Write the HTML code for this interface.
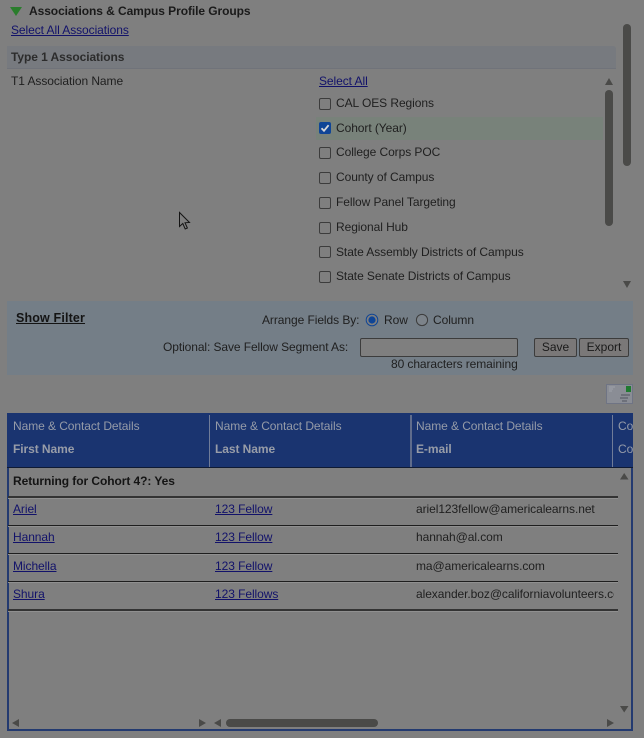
<!DOCTYPE html>
<html>
<head>
<meta charset="utf-8">
<style>
html,body{margin:0;padding:0;}
body{width:644px;height:738px;overflow:hidden;background:#7f7f7f;position:relative;font-family:"Liberation Sans",Arial,sans-serif;font-size:12px;color:#1f1f1f;}
#w{position:absolute;left:0;top:0;width:644px;height:738px;background:#7f7f7f;filter:blur(0.35px);}
.t{position:absolute;white-space:nowrap;line-height:14px;letter-spacing:-0.07px;}
.l{color:#12126a;text-decoration:underline;}
.b{font-weight:bold;}
.r{position:absolute;}
.cb{position:absolute;left:319px;width:10px;height:10px;border:1px solid #3c3c3c;border-radius:2px;}
.h{color:#959ba8;}
.hb{color:#989da8;font-weight:bold;}
.line{position:absolute;left:8px;width:610px;background:#1e1e1e;height:1px;box-shadow:0 1px 0 #909090;}
svg{position:absolute;overflow:visible;}
.btn{position:absolute;top:338px;height:17px;border:1px solid #3c3c3c;border-radius:2px;background:#7a7878;color:#1a1a1a;text-align:center;line-height:17px;box-sizing:content-box;}
</style>
</head>
<body>
<div id="w">
<svg style="left:10px;top:7px" width="13" height="9"><polygon points="0,0 12,0 6,9" fill="#2a7d2c"/></svg>
<div class="t b" style="left:29px;top:4px;color:#1a1a1a">Associations &amp; Campus Profile Groups</div>
<div class="t l" style="left:11px;top:23px">Select All Associations</div>

<div class="r" style="left:7px;top:46px;width:609px;height:22px;background:#777a7f;border-bottom:1px solid #70737a;border-radius:0 3px 0 0"></div>
<div class="t b" style="left:11px;top:50px;color:#2c2c2c">Type 1 Associations</div>
<div class="t" style="left:11px;top:74px">T1 Association Name</div>
<div class="t l" style="left:319px;top:74px">Select All</div>

<div class="r" style="left:316px;top:117px;width:287px;height:23px;background:#78827a"></div>
<div class="cb" style="top:98px"></div>
<div class="t" style="left:336px;top:96px">CAL OES Regions</div>
<svg style="left:319px;top:122px" width="12" height="12"><rect x="0" y="0" width="12" height="12" rx="2" fill="#0f4596"/><path d="M2.5 6.2 L5 8.8 L9.6 3.2" stroke="#d8d8d8" stroke-width="1.8" fill="none"/></svg>
<div class="t" style="left:336px;top:121px">Cohort (Year)</div>
<div class="cb" style="top:147px"></div>
<div class="t" style="left:336px;top:145px">College Corps POC</div>
<div class="cb" style="top:172px"></div>
<div class="t" style="left:336px;top:170px">County of Campus</div>
<div class="cb" style="top:197px"></div>
<div class="t" style="left:336px;top:195px">Fellow Panel Targeting</div>
<div class="cb" style="top:222px"></div>
<div class="t" style="left:336px;top:220px">Regional Hub</div>
<div class="cb" style="top:246px"></div>
<div class="t" style="left:336px;top:245px">State Assembly Districts of Campus</div>
<div class="cb" style="top:271px"></div>
<div class="t" style="left:336px;top:269px">State Senate Districts of Campus</div>

<svg style="left:605px;top:78px" width="10" height="7"><polygon points="0,7 8,7 4,0" fill="#4a4a48"/></svg>
<div class="r" style="left:605px;top:90px;width:8px;height:136px;border-radius:4px;background:#4a4a48"></div>
<div class="r" style="left:623px;top:24px;width:8px;height:142px;border-radius:4px;background:#4a4a48"></div>
<svg style="left:623px;top:281px" width="10" height="7"><polygon points="0,0 8,0 4,7" fill="#4a4a48"/></svg>

<svg style="left:179px;top:212px" width="12" height="19"><path d="M0.5 0.5 L0.5 14.5 L3.8 11.5 L6.2 17 L8.4 16 L6 10.8 L10.5 10.5 Z" fill="#7f7f7f" stroke="#141414" stroke-width="1"/></svg>

<div class="r" style="left:7px;top:301px;width:626px;height:74px;background:#747e87"></div>
<div class="t b" style="left:16px;top:311px;color:#141414;font-size:12.5px;letter-spacing:.15px;text-decoration:underline">Show Filter</div>
<div class="t" style="left:262px;top:313px">Arrange Fields By:</div>
<svg style="left:365px;top:313px" width="14" height="14"><circle cx="7" cy="7" r="5.8" fill="#7f7f7f" stroke="#0f4596" stroke-width="1"/><circle cx="7" cy="7" r="3.6" fill="#0f4596"/></svg>
<div class="t" style="left:384px;top:313px">Row</div>
<svg style="left:415px;top:313px" width="14" height="14"><circle cx="7" cy="7" r="5.6" fill="#7c838a" stroke="#3c3c3c" stroke-width="1"/></svg>
<div class="t" style="left:433px;top:313px">Column</div>
<div class="t" style="left:163px;top:340px;letter-spacing:-0.09px">Optional: Save Fellow Segment As:</div>
<div class="r" style="left:360px;top:338px;width:156px;height:17px;border:1px solid #3c3c3c;border-radius:2px;background:#7f7f7f"></div>
<div class="t" style="left:391px;top:357px;letter-spacing:-0.09px">80 characters remaining</div>
<div class="btn" style="left:534px;width:41px">Save</div>
<div class="btn" style="left:579px;width:48px">Export</div>

<svg style="left:606px;top:384px" width="27" height="20"><rect x="0" y="0" width="27" height="20" fill="#6f7484"/><rect x="1" y="1" width="25" height="18" fill="#8a8d95"/><rect x="20" y="2" width="5" height="6" fill="#1f7a30"/><path d="M3 3h6M3 5h4M3 7h3" stroke="#a0a3ab" stroke-width="1"/><path d="M15 11h9M14 14h8M16 17h5" stroke="#505460" stroke-width="1"/></svg>

<div class="r" style="left:7px;top:413px;width:626px;height:318px;box-sizing:border-box;border:2px solid #233a70;border-top:0"></div>
<div class="r" style="left:7px;top:413px;width:626px;height:55px;background:#1a3470;border-bottom:1px solid #0f1a33;box-sizing:border-box"></div>
<div class="r" style="left:209px;top:415px;width:1px;height:52px;background:#707c98"></div>
<div class="r" style="left:410px;top:415px;width:2px;height:52px;background:#5f6c8c"></div>
<div class="r" style="left:612px;top:415px;width:1px;height:52px;background:#707c98"></div>
<div class="t h" style="left:13px;top:419px">Name &amp; Contact Details</div>
<div class="t h" style="left:215px;top:419px">Name &amp; Contact Details</div>
<div class="t h" style="left:416px;top:419px">Name &amp; Contact Details</div>
<div class="t h" style="left:618px;top:419px;width:15px;overflow:hidden">Contact</div>
<div class="t hb" style="left:13px;top:442px">First Name</div>
<div class="t hb" style="left:215px;top:442px">Last Name</div>
<div class="t hb" style="left:416px;top:442px">E-mail</div>
<div class="t h" style="left:618px;top:442px;width:15px;overflow:hidden">Contact</div>

<div class="t b" style="left:13px;top:474px;color:#141414">Returning for Cohort 4?: Yes</div>
<div class="line" style="top:496px;height:2px;background:#333"></div>
<div class="line" style="top:525px"></div>
<div class="line" style="top:553px"></div>
<div class="line" style="top:581px"></div>
<div class="line" style="top:609px;height:2px;background:#333"></div>

<div class="t l" style="left:13px;top:502px">Ariel</div>
<div class="t l" style="left:215px;top:502px">123 Fellow</div>
<div class="t" style="left:416px;top:502px">ariel123fellow@americalearns.net</div>
<div class="t l" style="left:13px;top:530px">Hannah</div>
<div class="t l" style="left:215px;top:530px">123 Fellow</div>
<div class="t" style="left:416px;top:530px">hannah@al.com</div>
<div class="t l" style="left:13px;top:559px">Michella</div>
<div class="t l" style="left:215px;top:559px">123 Fellow</div>
<div class="t" style="left:416px;top:559px">ma@americalearns.com</div>
<div class="t l" style="left:13px;top:587px">Shura</div>
<div class="t l" style="left:215px;top:587px">123 Fellows</div>
<div class="t" style="left:416px;top:587px;width:198px;overflow:hidden">alexander.boz@californiavolunteers.com</div>

<svg style="left:620px;top:473px" width="10" height="7"><polygon points="0,6.5 8.5,6.5 4.2,0" fill="#4a4a48"/></svg>
<svg style="left:620px;top:706px" width="10" height="7"><polygon points="0,0 8.5,0 4.2,6.5" fill="#4a4a48"/></svg>
<svg style="left:12px;top:719px" width="7" height="9"><polygon points="7,0 7,8 0,4" fill="#4a4a48"/></svg>
<svg style="left:199px;top:719px" width="7" height="9"><polygon points="0,0 0,8 7,4" fill="#4a4a48"/></svg>
<svg style="left:214px;top:719px" width="7" height="9"><polygon points="7,0 7,8 0,4" fill="#4a4a48"/></svg>
<div class="r" style="left:226px;top:719px;width:152px;height:8px;border-radius:4px;background:#4a4a48"></div>
<svg style="left:607px;top:719px" width="7" height="9"><polygon points="0,0 0,8 7,4" fill="#4a4a48"/></svg>
</div>
</body>
</html>
